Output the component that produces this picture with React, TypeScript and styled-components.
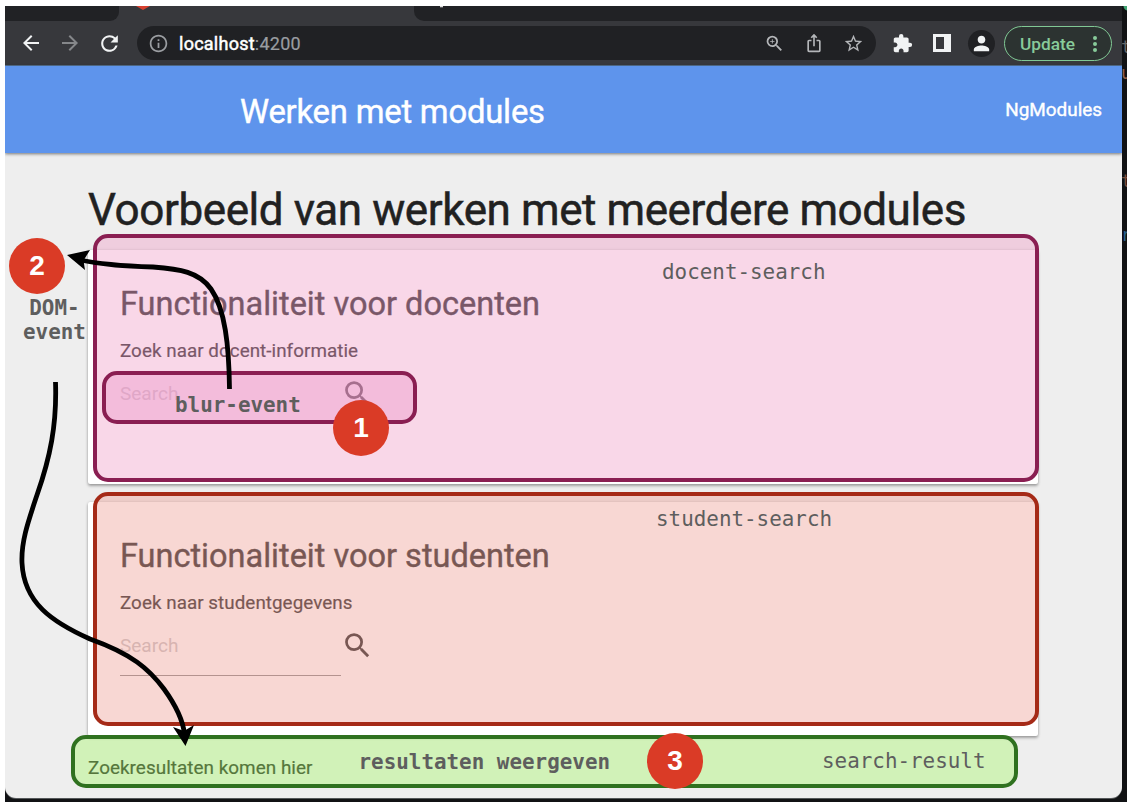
import React from "react";
import styled, { createGlobalStyle } from "styled-components";
import {
  MdArrowBack,
  MdArrowForward,
  MdRefresh,
  MdInfoOutline,
  MdZoomIn,
  MdIosShare,
  MdStarBorder,
  MdExtension,
  MdPerson,
  MdSearch,
} from "react-icons/md";

const GlobalStyle = createGlobalStyle`
  *, *::before, *::after { box-sizing: border-box; }
  body { margin: 0; background: #fff; font-family: Roboto, "Liberation Sans", sans-serif; }
  h1, h2, h3, p { margin: 0; font-weight: 400; }
  svg { display: block; flex: none; }
`;

const Canvas = styled.div`
  position: relative;
  width: 1136px;
  height: 808px;
  padding: 6px 9px 6px 5px;
  overflow: hidden;
`;

const Desktop = styled.div`
  display: flex;
  width: 1122px;
  height: 796px;
  background: #111214;
`;

const BrowserWindow = styled.div`
  width: 1117px;
  height: 792px;
  flex: none;
  display: flex;
  flex-direction: column;
  overflow: hidden;
  background: #eee;
  border-radius: 0 0 11px 11px;
  box-shadow: 0 1px 0 #55585a;
`;

const CodeStrip = styled.div`
  width: 5px;
  padding-left: 1px;
  overflow: hidden;
  display: flex;
  flex-direction: column;
  font: 17px/20px "DejaVu Sans Mono", monospace;
`;

const CodeGlyph = styled.span<{ $gap: number; $color: string }>`
  margin-top: ${(p) => p.$gap}px;
  margin-left: -2px;
  color: ${(p) => p.$color};
`;

const TabStrip = styled.div`
  height: 15px;
  display: flex;
  background: #37383c;
  flex: none;
`;

const IdleTab = styled.div<{ $side: "left" | "right" }>`
  background: #212225;
  ${(p) =>
    p.$side === "left"
      ? "width: 114px; border-bottom-right-radius: 9px;"
      : "flex: 1; border-bottom-left-radius: 10px;"}
`;

const ActiveTab = styled.div`
  width: 295px;
  padding-left: 17px;
`;

const Toolbar = styled.div`
  height: 45px;
  flex: none;
  display: flex;
  align-items: center;
  padding: 0 10px 0 14px;
  background: #37383c;
  border-bottom: 1px solid #54708f;
  color: #f1f3f4;
`;

const NavIcons = styled.div`
  display: flex;
  align-items: center;
  gap: 15px;
  width: 118px;
  stroke: currentColor;
  stroke-width: 0.6;
`;

const AddressBar = styled.div`
  width: 739px;
  height: 34px;
  border-radius: 17px;
  background: #202124;
  display: flex;
  align-items: center;
  padding: 0 12px 0 11px;
  color: #b4b6b9;
`;

const Url = styled.span`
  margin-left: 10px;
  flex: 1;
  font-size: 18px;
  letter-spacing: 0.25px;
  color: #9a9da1;
  -webkit-text-stroke: 0.2px currentColor;
  b { font-weight: 400; color: #fff; -webkit-text-stroke: 0.5px #fff; }
`;

const AddressActions = styled.div`
  display: flex;
  gap: 19px;
  stroke: currentColor;
  stroke-width: 0.4;
`;

const ToolbarActions = styled.div`
  display: flex;
  align-items: center;
  padding-left: 16px;
`;

const PanelIcon = styled.svg`
  margin-left: 20px;
`;

const Avatar = styled.div`
  width: 27px;
  height: 27px;
  border-radius: 50%;
  margin: 0 9px 0 17px;
  background: #202124;
  display: flex;
  align-items: center;
  justify-content: center;
`;

const UpdateButton = styled.div`
  width: 108px;
  height: 35px;
  border: 1.5px solid #81c995;
  border-radius: 18px;
  background: #2c3331;
  color: #88cb9a;
  font-size: 17.3px;
  font-weight: 500;
  display: flex;
  align-items: center;
  justify-content: space-between;
  padding: 1px 14px 0 15px;
`;

const Header = styled.header`
  height: 87px;
  flex: none;
  display: flex;
  align-items: center;
  justify-content: space-between;
  padding: 0 20px 0 235px;
  background: #5e94ec;
  color: #fff;
  box-shadow: 0 1px 3px rgba(0, 0, 0, 0.5);
`;

const Brand = styled.h1`
  font-size: 32.8px;
  letter-spacing: -0.2px;
  line-height: 40px;
  padding-top: 5px;
  white-space: nowrap;
  -webkit-text-stroke: 0.4px #fff;
`;

const NavLink = styled.span`
  font-size: 18.9px;
  -webkit-text-stroke: 0.4px #fff;
`;

const Page = styled.main`
  padding: 29px 84px 0 83px;
  color: #212121;
`;

const PageTitle = styled.h2`
  height: 68px;
  font-size: 44px;
  letter-spacing: -0.42px;
  line-height: 56px;
  white-space: nowrap;
  -webkit-text-stroke: 0.5px #212121;
`;

const Card = styled.section`
  width: 950px;
  height: 234px;
  margin-bottom: 18px;
  padding: 32px;
  color: #2b2b2b;
  background: #fff;
  border-radius: 2px;
  box-shadow: 0 2px 3px rgba(0, 0, 0, 0.3), 0 0 3px rgba(0, 0, 0, 0.15);
`;

const CardTitle = styled.h3`
  font-size: 32.5px;
  line-height: 44px;
  white-space: nowrap;
  -webkit-text-stroke: 0.4px currentColor;
`;

const CardText = styled.p`
  font-size: 18.8px;
  letter-spacing: 0.06px;
  line-height: 24px;
  margin-top: 12.5px;
  -webkit-text-stroke: 0.2px currentColor;
`;

const SearchRow = styled.div`
  display: flex;
  align-items: flex-start;
  margin-top: 4.5px;
`;

const SearchField = styled.div`
  width: 221px;
  height: 57px;
  padding-top: 15px;
  border-bottom: 1px solid #8e8e8e;
  font-size: 19px;
  line-height: 24px;
  color: #c9c5c6;
`;

const SearchIcon = styled(MdSearch)`
  margin-top: 10px;
  font-size: 33px;
`;

const ResultText = styled.p`
  margin-top: 3px;
  padding-top: 1px;
  font-size: 18.9px;
  letter-spacing: 0.03px;
  line-height: 26px;
  -webkit-text-stroke: 0.2px #212121;
`;

/* Annotations drawn over the browser window */
const Layer = styled.div`
  position: absolute;
  inset: 0;
`;

const Region = styled.div<{ $x: number; $y: number; $w: number; $h: number; $line: string; $fill: string }>`
  position: absolute;
  left: ${(p) => p.$x}px;
  top: ${(p) => p.$y}px;
  width: ${(p) => p.$w}px;
  height: ${(p) => p.$h}px;
  border: 4px solid ${(p) => p.$line};
  border-radius: 15px;
  background: ${(p) => p.$fill};
  background-clip: padding-box;
`;

const Label = styled.span<{ $x: number; $y: number; $bold?: boolean }>`
  position: absolute;
  left: ${(p) => p.$x}px;
  top: ${(p) => p.$y}px;
  font: ${(p) => (p.$bold ? 700 : 400)} 20.9px/24px "DejaVu Sans Mono", monospace;
  color: #5e5e5e;
  text-align: center;
  white-space: pre;
`;

const Badge = styled.div<{ $x: number; $y: number }>`
  position: absolute;
  left: ${(p) => p.$x}px;
  top: ${(p) => p.$y}px;
  width: 56px;
  height: 56px;
  border-radius: 50%;
  background: #da3b26;
  color: #fff;
  font: 700 28px/56px "Liberation Sans", sans-serif;
  text-align: center;
`;

const Arrows = styled.svg`
  position: absolute;
  inset: 0;
`;

const SearchCard = ({ title, text }: { title: string; text: string }) => (
  <Card>
    <CardTitle>{title}</CardTitle>
    <CardText>{text}</CardText>
    <SearchRow>
      <SearchField>Search</SearchField>
      <SearchIcon />
    </SearchRow>
  </Card>
);

export default function App() {
  return (
    <Canvas>
      <GlobalStyle />
      <Desktop>
        <BrowserWindow>
          <TabStrip>
            <IdleTab $side="left" />
            <ActiveTab>
              <svg width="14" height="4"><path d="M0 0H14L7 4Z" fill="#d8402f" /></svg>
            </ActiveTab>
            <IdleTab $side="right">
              <svg width="32" height="2"><rect x="26" width="3" height="1.3" fill="#ddd" /></svg>
            </IdleTab>
          </TabStrip>
          <Toolbar>
            <NavIcons>
              <MdArrowBack size={24} />
              <MdArrowForward size={24} color="#85878a" />
              <MdRefresh size={25} />
            </NavIcons>
            <AddressBar>
              <MdInfoOutline size={21} color="#9a9da1" />
              <Url><b>localhost</b>:4200</Url>
              <AddressActions>
                <MdZoomIn size={21} />
                <MdIosShare size={20} />
                <MdStarBorder size={21} />
              </AddressActions>
            </AddressBar>
            <ToolbarActions>
              <MdExtension size={21} />
              <PanelIcon width="18" height="18">
                <path fillRule="evenodd" d="M0 0H18V18H0ZM3 3V15H11V3Z" fill="#f1f3f4" />
              </PanelIcon>
              <Avatar><MdPerson size={23} /></Avatar>
              <UpdateButton>
                Update
                <svg width="4" height="18" fill="#88cb9a">
                  <circle cx="2" cy="3" r="2" />
                  <circle cx="2" cy="9" r="2" />
                  <circle cx="2" cy="15" r="2" />
                </svg>
              </UpdateButton>
            </ToolbarActions>
          </Toolbar>
          <Header>
            <Brand>Werken met modules</Brand>
            <NavLink>NgModules</NavLink>
          </Header>
          <Page>
            <PageTitle>Voorbeeld van werken met meerdere modules</PageTitle>
            <SearchCard title="Functionaliteit voor docenten" text="Zoek naar docent-informatie" />
            <SearchCard title="Functionaliteit voor studenten" text="Zoek naar studentgegevens" />
            <ResultText>Zoekresultaten komen hier</ResultText>
          </Page>
        </BrowserWindow>
        <CodeStrip>
          <svg width="4" height="5"><circle cx="5" cy="0" r="4.5" fill="#41a673" /></svg>
          <CodeGlyph $gap={26} $color="#686868">t</CodeGlyph>
          <CodeGlyph $gap={6} $color="#94604a">u</CodeGlyph>
          <CodeGlyph $gap={88} $color="#7a4d3d">t</CodeGlyph>
          <CodeGlyph $gap={34} $color="#29618f">r</CodeGlyph>
        </CodeStrip>
      </Desktop>

      <Layer>
        <Region $x={93} $y={234} $w={946} $h={248} $line="#8a1e52" $fill="rgba(240,155,198,.4)" />
        <Region $x={93} $y={492} $w={946} $h={234} $line="#a52a17" $fill="rgba(238,156,146,.4)" />
        <Region $x={102} $y={371} $w={315} $h={53} $line="#8a1e52" $fill="rgba(236,147,199,.4)" />
        <Region $x={71} $y={735} $w={947} $h={53} $line="#2f711f" $fill="rgba(165,248,103,.4)" />
        <Label $x={662} $y={260}>docent-search</Label>
        <Label $x={656} $y={507}>student-search</Label>
        <Label $x={822} $y={749}>search-result</Label>
        <Label $x={175} $y={393} $bold>blur-event</Label>
        <Label $x={358.5} $y={750} $bold>resultaten weergeven</Label>
        <Label $x={23} $y={296} $bold>{"DOM-\nevent"}</Label>
        <Arrows width="1136" height="808" fill="none" stroke="#000" strokeWidth="4.8">
          <path d="M229.5 389C229 345 225 309 211 289C199 272 180 269 153 267C126 266 104 265 80 260" />
          <path d="M67 255L90 250L83.5 260.5L85 270Z" fill="#000" stroke="none" />
          <path d="M55.5 382C57 425 50 458 37 495C28 522 21 542 22 563C24 603 52 622 90 639C132 654 149 669 164 689C177 707 183 721 184.5 734" />
          <path d="M185.5 746L173 727L184 731L194 725Z" fill="#000" stroke="none" />
        </Arrows>
        <Badge $x={9} $y={237.5}>2</Badge>
        <Badge $x={333} $y={399.5}>1</Badge>
        <Badge $x={647} $y={733}>3</Badge>
      </Layer>
    </Canvas>
  );
}
